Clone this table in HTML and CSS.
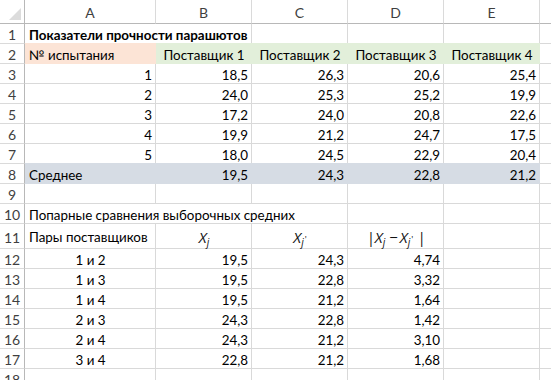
FILE: index.html
```html
<!DOCTYPE html>
<html lang="ru">
<head>
<meta charset="utf-8">
<link rel="stylesheet" href="styles.css">
</head>
<body>
<div class="sheet">
  <div class="corner"><span class="tri"></span></div>
  <div class="ch">A</div><div class="ch">B</div><div class="ch">C</div><div class="ch">D</div><div class="ch">E</div><div class="ch last"></div>

  <div class="rh">1</div>
  <div class="c bold span2">Показатели прочности парашютов</div><div class="c"></div><div class="c"></div><div class="c"></div><div class="c last"></div>

  <div class="rh">2</div>
  <div class="c peach">№ испытания</div><div class="c green ctr">Поставщик 1</div><div class="c green ctr">Поставщик 2</div><div class="c green ctr">Поставщик 3</div><div class="c green ctr">Поставщик 4</div><div class="c last"></div>

  <div class="rh">3</div>
  <div class="c r">1</div><div class="c r">18,5</div><div class="c r">26,3</div><div class="c r">20,6</div><div class="c r">25,4</div><div class="c last"></div>
  <div class="rh">4</div>
  <div class="c r">2</div><div class="c r">24,0</div><div class="c r">25,3</div><div class="c r">25,2</div><div class="c r">19,9</div><div class="c last"></div>
  <div class="rh">5</div>
  <div class="c r">3</div><div class="c r">17,2</div><div class="c r">24,0</div><div class="c r">20,8</div><div class="c r">22,6</div><div class="c last"></div>
  <div class="rh">6</div>
  <div class="c r">4</div><div class="c r">19,9</div><div class="c r">21,2</div><div class="c r">24,7</div><div class="c r">17,5</div><div class="c last"></div>
  <div class="rh">7</div>
  <div class="c r">5</div><div class="c r">18,0</div><div class="c r">24,5</div><div class="c r">22,9</div><div class="c r">20,4</div><div class="c last"></div>

  <div class="rh">8</div>
  <div class="c grey">Среднее</div><div class="c grey r">19,5</div><div class="c grey r">24,3</div><div class="c grey r">22,8</div><div class="c grey r">21,2</div><div class="c last"></div>

  <div class="rh">9</div>
  <div class="c"></div><div class="c"></div><div class="c"></div><div class="c"></div><div class="c"></div><div class="c last"></div>

  <div class="rh">10</div>
  <div class="c span3">Попарные сравнения выборочных средних</div><div class="c"></div><div class="c"></div><div class="c last"></div>

  <div class="rh">11</div>
  <div class="c">Пары поставщиков</div>
  <div class="c ctr"><span class="m"><i>X</i><sub><i>j</i></sub></span></div>
  <div class="c ctr"><span class="m"><i>X</i><sub><i>j</i><span class="pr">'</span></sub></span></div>
  <div class="c ctr"><span class="m"><i>|X</i><sub><i>j</i></sub><span class="minus">−</span><i>X</i><sub><i>j</i><span class="pr">'</span></sub><i class="bar">|</i></span></div>
  <div class="c"></div><div class="c last"></div>

  <div class="rh">12</div>
  <div class="c ctr">1 и 2</div><div class="c r">19,5</div><div class="c r">24,3</div><div class="c r">4,74</div><div class="c"></div><div class="c last"></div>
  <div class="rh">13</div>
  <div class="c ctr">1 и 3</div><div class="c r">19,5</div><div class="c r">22,8</div><div class="c r">3,32</div><div class="c"></div><div class="c last"></div>
  <div class="rh">14</div>
  <div class="c ctr">1 и 4</div><div class="c r">19,5</div><div class="c r">21,2</div><div class="c r">1,64</div><div class="c"></div><div class="c last"></div>
  <div class="rh">15</div>
  <div class="c ctr">2 и 3</div><div class="c r">24,3</div><div class="c r">22,8</div><div class="c r">1,42</div><div class="c"></div><div class="c last"></div>
  <div class="rh">16</div>
  <div class="c ctr">2 и 4</div><div class="c r">24,3</div><div class="c r">21,2</div><div class="c r">3,10</div><div class="c"></div><div class="c last"></div>
  <div class="rh">17</div>
  <div class="c ctr">3 и 4</div><div class="c r">22,8</div><div class="c r">21,2</div><div class="c r">1,68</div><div class="c"></div><div class="c last"></div>
  <div class="rh">18</div>
  <div class="c"></div><div class="c"></div><div class="c"></div><div class="c"></div><div class="c"></div><div class="c last"></div>
</div>
</body>
</html>
```
FILE: styles.css
```css
html, body {
  margin: 0;
  padding: 0;
  background: #fff;
  overflow: hidden;
}
body {
  width: 551px;
  height: 380px;
}
.sheet {
  display: grid;
  grid-template-columns: 25px 131px 96px 96px 96px 96px 1fr;
  grid-template-rows: 24px repeat(10, 20px) 25px repeat(7, 20px);
  font-family: Lato, "Open Sans", sans-serif;
  font-size: 13.4px;
  color: #000;
}
.sheet > div {
  box-sizing: border-box;
  border-right: 1px solid #d9d9d9;
  border-bottom: 1px solid #d9d9d9;
  display: flex;
  align-items: center;
  white-space: nowrap;
  overflow: visible;
  min-width: 0;
}
.corner {
  position: relative;
  border-right-color: #b8b8b8 !important;
  border-bottom-color: #b8b8b8 !important;
}
.tri {
  position: absolute;
  right: 3px;
  bottom: 3px;
  width: 0;
  height: 0;
  border-left: 12px solid transparent;
  border-bottom: 12px solid #dcdcdc;
}
.ch {
  justify-content: center;
  color: #3f3f3f;
  border-right-color: #dadada !important;
  border-bottom-color: #b8b8b8 !important;
  padding-top: 1px;
  font-size: 14px;
}
.rh {
  justify-content: center;
  color: #3f3f3f;
  border-right-color: #b8b8b8 !important;
  border-bottom-color: #dadada !important;
  padding-top: 2px;
  font-size: 14px;
}
.c {
  padding: 2px 3px 0 4px;
}
.c.r {
  justify-content: flex-end;
}
.c.ctr {
  justify-content: center;
}
.bold {
  font-weight: 700;
}
.span2 {
  grid-column: span 2;
}
.span3 {
  grid-column: span 3;
}
.sheet > .last {
  border-right: none;
}
.peach {
  background: #fce4d6;
  border-color: #fce4d6 !important;
  box-shadow: 0 -1px 0 #fce4d6;
}
.green {
  background: #e2efda;
  border-color: #e2efda !important;
  box-shadow: 0 -1px 0 #e2efda;
}
.grey {
  background: #d6dce4;
  border-color: #d6dce4 !important;
  box-shadow: 0 -1px 0 #d6dce4;
}
.m {
  font-family: "Open Sans", Lato, sans-serif;
  font-size: 15px;
  padding-top: 0;
  color: #111;
}
.m sub {
  font-size: 10px;
  vertical-align: -3px;
  line-height: 0;
}
.m .pr {
  font-size: 9px;
  vertical-align: 3px;
  margin-left: 1px;
}
.minus {
  margin: 0 2px 0 4px;
}
.bar {
  margin-left: 4px;
}
```
